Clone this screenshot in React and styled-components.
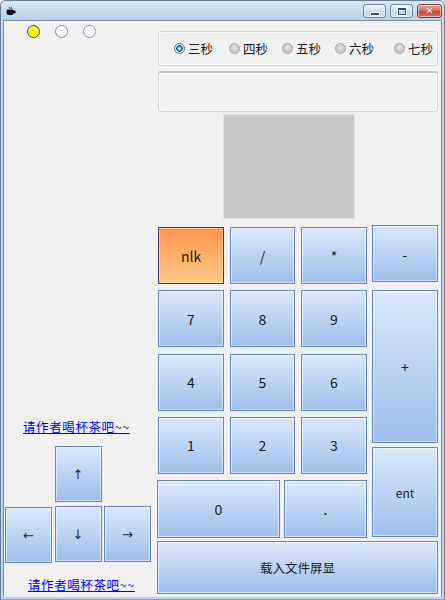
import React from 'react';
import styled, { createGlobalStyle, css } from 'styled-components';

const GlobalStyle = createGlobalStyle`
  html, body {
    margin: 0;
    padding: 0;
    background: #f0f0f0;
  }
  body {
    font-family: "Noto Sans", "Noto Sans CJK SC", sans-serif;
    color: #1a1a1a;
  }
`;

const cjk = `"Noto Sans CJK SC", "Noto Sans", sans-serif`;

const Window = styled.div`
  width: 445px;
  height: 600px;
  box-sizing: border-box;
  display: flex;
  flex-direction: column;
  border: 1px solid #6b7d93;
  border-bottom: none;
  border-radius: 6px 6px 0 0;
  background: linear-gradient(#d7e4f3, #c0d4eb 40px, #bcd2ea);
  overflow: hidden;
`;

const TitleBar = styled.div`
  height: 19px;
  flex: none;
  display: flex;
  align-items: flex-start;
  padding: 0 2px 0 5px;
  background: linear-gradient(#dce7f5, #c6d8ee 60%, #b9d0ea);
`;

const AppIcon = styled.svg`
  margin-top: 6px;
  flex: none;
`;

const Caption = styled.div`
  display: flex;
  gap: 4px;
  margin-left: auto;
  margin-top: 3px;
`;

const CapButton = styled.div`
  width: ${({ $w }) => $w}px;
  height: 14px;
  box-sizing: border-box;
  border: 1px solid ${({ $close }) => ($close ? '#7b3b32' : '#6f84a0')};
  border-radius: 3px;
  display: flex;
  align-items: center;
  justify-content: center;
  background: ${({ $close }) =>
    $close
      ? 'linear-gradient(#e8a898, #d46a57 50%, #c24a38 51%, #d0705c)'
      : 'linear-gradient(#eaf1fa, #d3e1f1 50%, #c3d5ec 51%, #d2e2f4)'};
  box-shadow: inset 0 0 0 1px rgba(255, 255, 255, 0.5);
`;

const MinGlyph = styled.div`
  width: 8px;
  height: 2px;
  margin-top: 5px;
  background: #3c4e66;
  box-shadow: 0 0 0 1px #fff;
`;

const MaxGlyph = styled.div`
  width: 6px;
  height: 4px;
  border: 1px solid #3c4e66;
  border-top-width: 2px;
  box-shadow: 0 0 0 1px #fff;
`;

const CloseGlyph = styled.span`
  color: #fff;
  font: bold 10px "DejaVu Sans", sans-serif;
  line-height: 1;
  text-shadow: 0 0 1px #5a1a10;
`;

const Client = styled.div`
  flex: 1;
  margin: 0 2px;
  display: flex;
  background: #f0f0f0;
  border: 1px solid #7d8ea4;
  border-bottom: none;
`;

const BottomFrame = styled.div`
  height: 3px;
  flex: none;
  background: linear-gradient(#bcd2ea, #bcd2ea 2px, #4fb9d6 2px);
`;

/* ---------- left pane ---------- */

const LeftPane = styled.div`
  width: 153px;
  flex: none;
  display: flex;
  flex-direction: column;
  padding-top: 4px;
`;

const DotRow = styled.div`
  display: flex;
  gap: 15px;
  padding-left: 23px;
`;

const Dot = styled.div`
  width: 13px;
  height: 13px;
  box-sizing: border-box;
  border-radius: 50%;
  border: 1.5px solid ${({ $on }) => ($on ? '#3a3a96' : '#7488b8')};
  background: ${({ $on }) => ($on ? '#ffff00' : '#ffffff')};
`;

const BottomGroup = styled.div`
  margin-top: auto;
  padding-bottom: 4px;
  display: flex;
  flex-direction: column;
`;

const Link = styled.a`
  display: block;
  margin-left: ${({ $x }) => $x}px;
  margin-top: ${({ $top }) => $top || 0}px;
  font-family: ${cjk};
  font-size: 12.5px;
  letter-spacing: 0.6px;
  line-height: 16px;
  color: #0000ff;
  text-decoration: underline;
  cursor: pointer;
`;

const ArrowPad = styled.div`
  margin-top: 11px;
  margin-left: 1px;
  display: grid;
  grid-template-columns: 47px 47px 47px;
  grid-template-rows: 56px 57px;
  grid-template-areas:
    '. up .'
    'left down right';
  column-gap: 2.5px;
  row-gap: 4px;
`;

/* ---------- right pane ---------- */

const RightPane = styled.div`
  width: 281px;
  flex: none;
  display: flex;
  flex-direction: column;
  padding-top: 10px;
`;

const GroupBox = styled.div`
  margin-left: 1px;
  height: ${({ $h }) => $h}px;
  margin-top: ${({ $top }) => $top || 0}px;
  box-sizing: border-box;
  border: 1px solid #d5d5d5;
  border-top-color: ${({ $sunken }) => ($sunken ? '#c4c4c4' : '#d5d5d5')};
  border-top-width: ${({ $sunken }) => ($sunken ? 2 : 1)}px;
  border-radius: 3px;
  box-shadow: inset 0 0 0 1px #fbfbfb;
  display: flex;
  align-items: center;
  padding-left: 15px;
`;

const Option = styled.label`
  width: ${({ $w }) => $w}px;
  flex: none;
  display: flex;
  align-items: center;
  gap: 3px;
  font-family: ${cjk};
  font-size: 12.5px;
  color: #1a1a1a;
`;

const RadioMark = styled.span`
  width: 11px;
  height: 11px;
  box-sizing: border-box;
  border-radius: 50%;
  border: 1px solid ${({ $on }) => ($on ? '#3a6f9c' : '#a0a0a0')};
  background: ${({ $on }) =>
    $on
      ? 'radial-gradient(circle, #bfe6fb 0 1px, #2a86c8 2px, #14548f 3px, #e8eef5 3.6px, #fff)'
      : 'radial-gradient(circle at 50% 40%, #e4e4e4, #c8c8c8 60%, #f2f2f2)'};
`;

const Screen = styled.div`
  margin-top: 2px;
  margin-left: 66px;
  width: 132px;
  height: 105px;
  box-sizing: border-box;
  background: #c8c8c8;
  border: 1px solid #e2e2e2;
`;

const Keypad = styled.div`
  margin-top: 6px;
  height: 312px;
  display: flex;
  align-items: flex-start;
`;

const NumBlock = styled.div`
  width: 210px;
  margin-top: 2px;
  display: flex;
  flex-direction: column;
`;

const NumGrid = styled.div`
  margin-left: 1px;
  display: grid;
  grid-template-columns: 66px 65px 66px;
  grid-auto-rows: 57px;
  column-gap: 6px;
  row-gap: 6.3px;
`;

const ZeroRow = styled.div`
  margin-top: 6px;
  display: flex;
  gap: 4px;
`;

const OpColumn = styled.div`
  margin-left: 5px;
  width: 66px;
  display: flex;
  flex-direction: column;
`;

const Key = styled.button`
  box-sizing: border-box;
  width: ${({ $w }) => ($w ? `${$w}px` : '100%')};
  height: ${({ $h }) => ($h ? `${$h}px` : '100%')};
  margin: ${({ $top }) => $top || 0}px 0 0 ${({ $left }) => $left || 0}px;
  grid-area: ${({ $area }) => $area || 'auto'};
  padding: 0;
  flex: none;
  border: 1px solid #6586bd;
  background: linear-gradient(#dae8fc, #bcd3f3 50%, #9ebde9);
  box-shadow: inset 0 0 0 1px rgba(255, 255, 255, 0.5);
  font-family: ${cjk};
  font-size: ${({ $size }) => $size || 14}px;
  color: #1a1a1a;
  display: flex;
  align-items: center;
  justify-content: center;
  cursor: pointer;

  ${({ $hot }) =>
    $hot &&
    css`
      border-color: #3d3c7c;
      background: linear-gradient(#ff944d, #ffb06a 50%, #ffc98a);
      box-shadow: inset 0 0 0 1px rgba(255, 230, 190, 0.45);
    `}
`;

const Arrow = styled.span`
  font-family: "DejaVu Sans", sans-serif;
  font-size: 13px;
  color: #2a2a2a;
`;

const AppGlyph = () => (
  <AppIcon width="10" height="8" viewBox="0 0 10 8">
    <path d="M1 3h6v3a2 2 0 0 1-2 2H3a2 2 0 0 1-2-2z M7 4h1.5a1 1 0 0 1 0 2H7z M3 0l1 2M5 0l1 2" fill="#111" stroke="#111" strokeWidth="0.8" />
  </AppIcon>
);

const seconds = [
  { label: '三秒', w: 55, on: true },
  { label: '四秒', w: 53 },
  { label: '五秒', w: 53 },
  { label: '六秒', w: 59 },
  { label: '七秒', w: 50 },
];

const digits = ['7', '8', '9', '4', '5', '6', '1', '2', '3'];

export default function App() {
  return (
    <>
      <GlobalStyle />
      <Window>
        <TitleBar>
          <AppGlyph />
          <Caption>
            <CapButton $w={23}>
              <MinGlyph />
            </CapButton>
            <CapButton $w={23}>
              <MaxGlyph />
            </CapButton>
            <CapButton $w={25} $close>
              <CloseGlyph>✕</CloseGlyph>
            </CapButton>
          </Caption>
        </TitleBar>

        <Client>
          <LeftPane>
            <DotRow>
              <Dot $on />
              <Dot />
              <Dot />
            </DotRow>

            <BottomGroup>
              <Link $x={19}>请作者喝杯茶吧~~</Link>
              <ArrowPad>
                <Key $area="up">
                  <Arrow>↑</Arrow>
                </Key>
                <Key $area="left" $top={1} $h={56}>
                  <Arrow>←</Arrow>
                </Key>
                <Key $area="down" $h={56}>
                  <Arrow>↓</Arrow>
                </Key>
                <Key $area="right" $h={56}>
                  <Arrow>→</Arrow>
                </Key>
              </ArrowPad>
              <Link $x={24} $top={14}>
                请作者喝杯茶吧~~
              </Link>
            </BottomGroup>
          </LeftPane>

          <RightPane>
            <GroupBox $h={35}>
              {seconds.map((s) => (
                <Option key={s.label} $w={s.w}>
                  <RadioMark $on={s.on} />
                  {s.label}
                </Option>
              ))}
            </GroupBox>
            <GroupBox $h={41} $top={5} $sunken />
            <Screen />

            <Keypad>
              <NumBlock>
                <NumGrid>
                  <Key $hot>nlk</Key>
                  <Key>/</Key>
                  <Key>*</Key>
                  {digits.map((d) => (
                    <Key key={d}>{d}</Key>
                  ))}
                </NumGrid>
                <ZeroRow>
                  <Key $w={123} $h={58}>
                    0
                  </Key>
                  <Key $w={83} $h={58}>
                    .
                  </Key>
                </ZeroRow>
              </NumBlock>
              <OpColumn>
                <Key $h={57}>-</Key>
                <Key $h={153} $top={8}>
                  +
                </Key>
                <Key $h={90} $top={4} $size={12}>
                  ent
                </Key>
              </OpColumn>
            </Keypad>

            <Key $h={53} $w={281} $top={4} $size={12.5}>
              载入文件屏显
            </Key>
          </RightPane>
        </Client>
        <BottomFrame />
      </Window>
    </>
  );
}
